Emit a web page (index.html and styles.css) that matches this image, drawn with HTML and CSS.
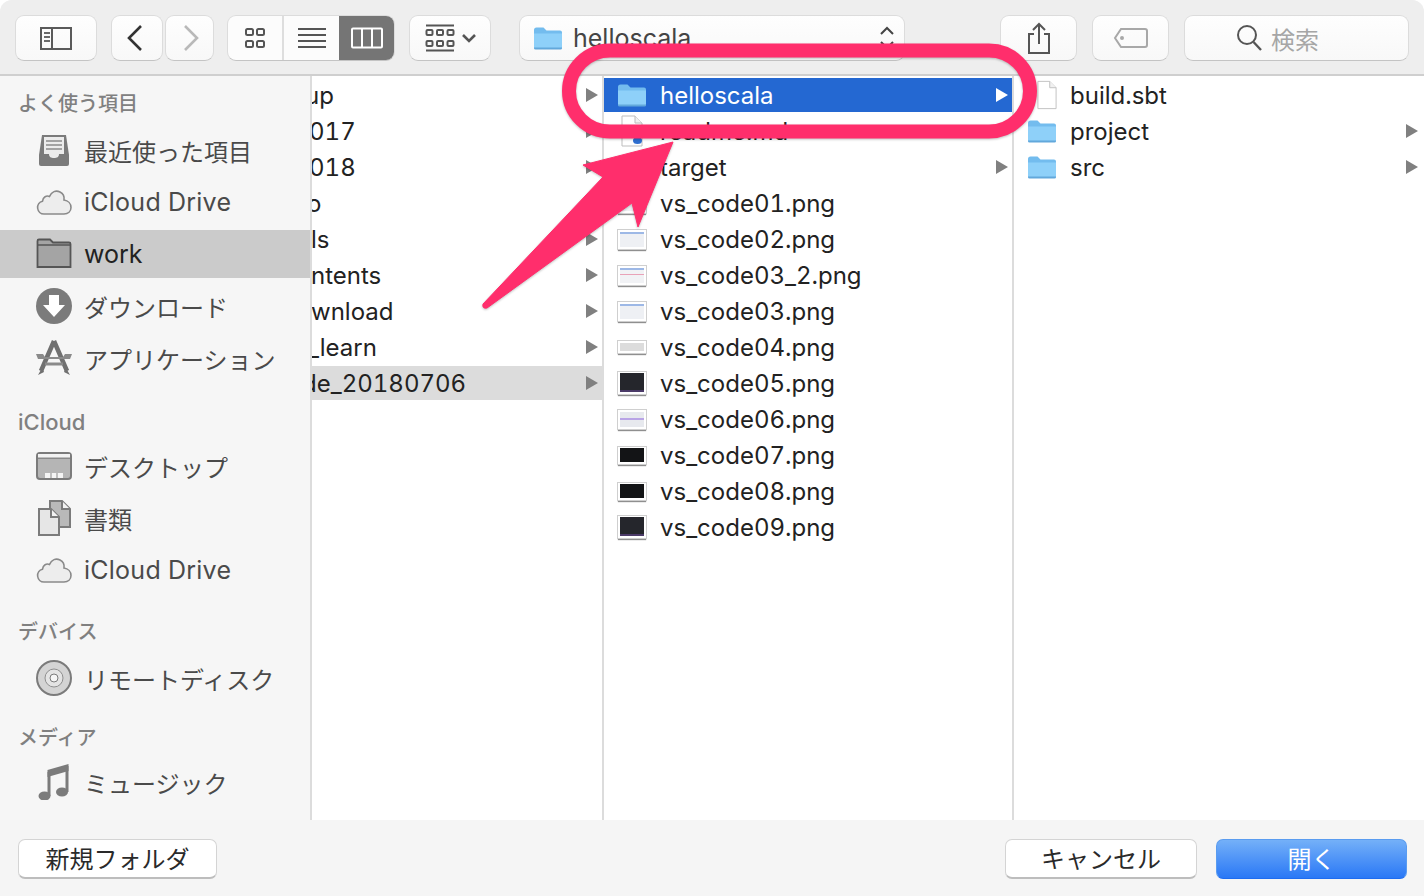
FILE: index.html
```html
<!DOCTYPE html>
<html lang="ja">
<head>
<meta charset="utf-8">
<title>helloscala</title>
<link rel="stylesheet" href="styles.css">
</head>
<body>
<svg class="defs" aria-hidden="true">
  <symbol id="folder" viewBox="0 0 30 24">
    <path d="M1 4a2.500 2.500 0 0 1 2.500-2.500h7l3 3H27a2 2 0 0 1 2 2V21a2 2 0 0 1-2 2H3a2 2 0 0 1-2-2z" fill="#73bcee"/>
    <path d="M1 7.500h28V21a2 2 0 0 1-2 2H3a2 2 0 0 1-2-2z" fill="#8ed0f9"/>
    <path d="M1 21.500h28V22a1.500 1.500 0 0 1-1.500 1.500h-25A1.500 1.500 0 0 1 1 22z" fill="#62a8db"/>
  </symbol>
  <symbol id="doc" viewBox="0 0 22 32">
    <path d="M1 1h13l7 7v23H1z" fill="#fff" stroke="#bdbdbd"/>
    <path d="M14 1v7h7" fill="#f1f1f1" stroke="#bdbdbd"/>
  </symbol>
  <symbol id="cloud" viewBox="0 0 36 36">
    <path d="M8 30a6.500 6.500 0 0 1-1.500-12.800C7 13 10.500 11 13.500 12.500 15.500 7.500 20 6 24 8c3 1.500 4.500 4.500 4 8 4 .5 7 3.500 7 7.500S32 30 28 30z" fill="#ededed" stroke="#8a8a8a" stroke-width="1.600"/>
  </symbol>
</svg>

<div class="window">
  <header class="toolbar">
    <button class="btn w-toggle" aria-label="sidebar">
      <svg width="34" height="26" viewBox="0 0 34 26"><rect x="2" y="3" width="30" height="21" fill="none" stroke="#5a5a5a" stroke-width="2"/><path d="M13 3v21" stroke="#5a5a5a" stroke-width="2"/><path d="M5 8h6M5 12h6M5 16h6" stroke="#6a6a6a" stroke-width="2"/></svg>
    </button>
    <button class="btn w-back" aria-label="back">
      <svg width="20" height="28" viewBox="0 0 20 28"><path d="M16 2 4 14l12 12" fill="none" stroke="#333" stroke-width="2.600"/></svg>
    </button>
    <button class="btn w-fwd" aria-label="forward">
      <svg width="20" height="28" viewBox="0 0 20 28"><path d="M4 2l12 12L4 26" fill="none" stroke="#b9b9b9" stroke-width="2.600"/></svg>
    </button>
    <div class="seg">
      <span class="seg-i seg-a">
        <svg width="22" height="22" viewBox="0 0 22 22" fill="none" stroke="#555" stroke-width="2"><rect x="2" y="2" width="7" height="6" rx="1.500"/><rect x="13" y="2" width="7" height="6" rx="1.500"/><rect x="2" y="14" width="7" height="6" rx="1.500"/><rect x="13" y="14" width="7" height="6" rx="1.500"/></svg>
      </span>
      <span class="seg-i seg-b">
        <svg width="30" height="22" viewBox="0 0 30 22" stroke="#555" stroke-width="2"><path d="M1 2h28M1 8h28M1 14h28M1 20h28"/></svg>
      </span>
      <span class="seg-i seg-c">
        <svg width="32" height="22" viewBox="0 0 32 22" fill="none" stroke="#fff" stroke-width="2"><rect x="1" y="1.500" width="30" height="19" rx="1"/><path d="M11 1.500v19M21 1.500v19"/></svg>
      </span>
    </div>
    <button class="btn w-arr" aria-label="arrange">
      <svg width="52" height="28" viewBox="0 0 52 28" fill="none" stroke="#555" stroke-width="2"><path d="M1 1.500h28M1 26.500h28"/><rect x="1.500" y="6" width="6" height="5" rx="1"/><rect x="12" y="6" width="6" height="5" rx="1"/><rect x="22.500" y="6" width="6" height="5" rx="1"/><rect x="1.500" y="17" width="6" height="5" rx="1"/><rect x="12" y="17" width="6" height="5" rx="1"/><rect x="22.500" y="17" width="6" height="5" rx="1"/><path d="M38 11l6 6 6-6" stroke-width="2.600"/></svg>
    </button>
    <div class="btn w-path">
      <svg class="path-ic" width="30" height="24"><use href="#folder"/></svg>
      <span class="path-t">helloscala</span>
      <svg class="updown" width="16" height="26" viewBox="0 0 16 26" fill="none" stroke="#444" stroke-width="2"><path d="M2 9l6-6 6 6M2 17l6 6 6-6"/></svg>
    </div>
    <button class="btn w-share" aria-label="share">
      <svg width="26" height="32" viewBox="0 0 26 32" fill="none" stroke="#555" stroke-width="2"><path d="M8 12H3v19h20V12h-5"/><path d="M13 22V2M7 8l6-6 6 6"/></svg>
    </button>
    <button class="btn w-tag" aria-label="tag">
      <svg width="36" height="22" viewBox="0 0 36 22" fill="none" stroke="#a8a8a8" stroke-width="2"><path d="M8 2h24a2 2 0 0 1 2 2v14a2 2 0 0 1-2 2H8l-6-9z"/><circle cx="9" cy="11" r="1"/></svg>
    </button>
    <div class="btn w-search">
      <svg width="26" height="28" viewBox="0 0 26 28" fill="none" stroke="#555" stroke-width="2"><circle cx="11" cy="11" r="9"/><path d="M17.500 18 25 26" stroke-width="2.400"/></svg>
      <span class="search-t">検索</span>
    </div>
  </header>

  <main class="body">
    <nav class="side">
      <div class="lab lab-1">よく使う項目</div>
      <div class="item">
        <svg class="ico" viewBox="0 0 36 36"><path d="M6 3h24l3 20v9a2 2 0 0 1-2 2H5a2 2 0 0 1-2-2v-9z" fill="#7b7b7b"/><path d="M8 5h20v17h-5c0 3-2 4-5 4s-5-1-5-4H8z" fill="#ececec"/><path d="M10 9h16M10 13h16M10 17h16" stroke="#8a8a8a" stroke-width="1.500"/></svg>
        <span>最近使った項目</span>
      </div>
      <div class="item">
        <svg class="ico"><use href="#cloud"/></svg>
        <span class="drive">iCloud Drive</span>
      </div>
      <div class="item item-on">
        <svg class="ico" viewBox="0 0 36 36"><path d="M1.500 5a1.500 1.500 0 0 1 1.500-1.500h11l3 3h16A1.500 1.500 0 0 1 34.500 8v23H1.500z" fill="#a4a4a4" stroke="#555" stroke-width="1.800"/><path d="M2 9h32" stroke="#555" stroke-width="1.400"/></svg>
        <span>work</span>
      </div>
      <div class="item">
        <svg class="ico" viewBox="0 0 36 36"><circle cx="18" cy="18" r="18" fill="#7b7b7b"/><path d="M13 7h10v10h6L18 29 7 17h6z" fill="#fff"/></svg>
        <span>ダウンロード</span>
      </div>
      <div class="item">
        <svg class="ico" viewBox="0 0 36 36"><path d="M18 1 5 31M18 1l13 30" stroke="#707070" stroke-width="4.500" fill="none"/><path d="M0 14h7l2 3h18l2-3h7l-2 5H2z" fill="#8a8a8a"/><path d="M9 24h18" stroke="#8a8a8a" stroke-width="3"/><path d="M6 28l-4 7 6-3zM30 28l4 7-6-3z" fill="#707070"/></svg>
        <span>アプリケーション</span>
      </div>

      <div class="lab lab-2">iCloud</div>
      <div class="item">
        <svg class="ico" viewBox="0 0 36 36"><rect x="1" y="5" width="34" height="26" rx="3" fill="#b5b5b5" stroke="#7b7b7b" stroke-width="2"/><path d="M1 10h34" stroke="#7b7b7b" stroke-width="1.500"/><path d="M2 6h32v3.500H2z" fill="#f2f2f2"/><path d="M9 25h18v5H9z" fill="#f4f4f4"/><path d="M15 25v5M21 25v5" stroke="#8a8a8a"/></svg>
        <span>デスクトップ</span>
      </div>
      <div class="item">
        <svg class="ico" viewBox="0 0 36 36"><path d="M14 1h12l8 8v18H14z" fill="#b9b9b9" stroke="#7b7b7b" stroke-width="2"/><path d="M3 9h12l8 8v18H3z" fill="#e6e6e6" stroke="#7b7b7b" stroke-width="2"/><path d="M15 9v8h8M26 1v8h8" fill="#f2f2f2" stroke="#7b7b7b" stroke-width="2"/></svg>
        <span>書類</span>
      </div>
      <div class="item">
        <svg class="ico"><use href="#cloud"/></svg>
        <span class="drive">iCloud Drive</span>
      </div>

      <div class="lab lab-3">デバイス</div>
      <div class="item">
        <svg class="ico" viewBox="0 0 36 36"><circle cx="18" cy="18" r="17" fill="#d4d4d4" stroke="#7b7b7b" stroke-width="2"/><circle cx="18" cy="18" r="9" fill="#e4e4e4" stroke="#8f8f8f"/><circle cx="18" cy="18" r="4" fill="#f6f6f6" stroke="#7b7b7b"/></svg>
        <span>リモートディスク</span>
      </div>

      <div class="lab lab-4">メディア</div>
      <div class="item">
        <svg class="ico" viewBox="0 0 36 36"><path d="M13 8v24M31 2v26" stroke="#7b7b7b" stroke-width="3"/><path d="M11.500 6 32.500 0v7L11.500 13z" fill="#7b7b7b"/><ellipse cx="8.500" cy="32" rx="6" ry="4.500" fill="#7b7b7b"/><ellipse cx="26" cy="28" rx="6" ry="4.500" fill="#7b7b7b"/></svg>
        <span>ミュージック</span>
      </div>
    </nav>

    <section class="col col-1">
      <div class="row"><span class="cut-a">up</span><i class="tri"></i></div>
      <div class="row"><span class="cut-b">017</span><i class="tri"></i></div>
      <div class="row"><span class="cut-b">018</span><i class="tri"></i></div>
      <div class="row"><span class="cut-c">o</span><i class="tri"></i></div>
      <div class="row"><span class="cut-d">ls</span><i class="tri"></i></div>
      <div class="row"><span class="cut-e">ntents</span><i class="tri"></i></div>
      <div class="row"><span class="cut-e">wnload</span><i class="tri"></i></div>
      <div class="row"><span class="cut-g">_learn</span><i class="tri"></i></div>
      <div class="row row-gray"><span class="cut-f">de_20180706</span><i class="tri"></i></div>
    </section>

    <section class="col col-2">
      <div class="row row-sel"><svg class="fic"><use href="#folder"/></svg><span>helloscala</span><i class="tri tri-w"></i></div>
      <div class="row"><span class="slot"><svg class="dic" width="24" height="32"><use href="#doc"/></svg><b class="dic-mark"></b></span><span>readme.md</span></div>
      <div class="row"><svg class="fic"><use href="#folder"/></svg><span>target</span><i class="tri"></i></div>
      <div class="row"><span class="slot"><i class="th th-lt"></i></span><span>vs_code01.png</span></div>
      <div class="row"><span class="slot"><i class="th th-lt"></i></span><span>vs_code02.png</span></div>
      <div class="row"><span class="slot"><i class="th th-pink"></i></span><span>vs_code03_2.png</span></div>
      <div class="row"><span class="slot"><i class="th th-lt"></i></span><span>vs_code03.png</span></div>
      <div class="row"><span class="slot"><i class="th th-wide"></i></span><span>vs_code04.png</span></div>
      <div class="row"><span class="slot"><i class="th th-tall"></i></span><span>vs_code05.png</span></div>
      <div class="row"><span class="slot"><i class="th th-purple"></i></span><span>vs_code06.png</span></div>
      <div class="row"><span class="slot"><i class="th th-dk"></i></span><span>vs_code07.png</span></div>
      <div class="row"><span class="slot"><i class="th th-dk"></i></span><span>vs_code08.png</span></div>
      <div class="row"><span class="slot"><i class="th th-tall"></i></span><span>vs_code09.png</span></div>
    </section>

    <section class="col col-3">
      <div class="row"><span class="slot slot-doc"><svg width="20" height="30"><use href="#doc"/></svg></span><span>build.sbt</span></div>
      <div class="row"><svg class="fic"><use href="#folder"/></svg><span>project</span><i class="tri"></i></div>
      <div class="row"><svg class="fic"><use href="#folder"/></svg><span>src</span><i class="tri"></i></div>
    </section>
  </main>

  <footer class="foot">
    <button class="fbtn f-new">新規フォルダ</button>
    <button class="fbtn f-cancel">キャンセル</button>
    <button class="fbtn f-open">開く</button>
  </footer>

  <svg class="annot" width="1424" height="896" viewBox="0 0 1424 896" aria-hidden="true">
    <rect x="569" y="50.500" width="461" height="81" rx="41" fill="none" stroke="#ff2e6c" stroke-width="14"/>
    <path d="M673 142 583 165 603 177 483 304Q482 309 487 308L632 203 638 227z" fill="#ff2e6c" stroke="#ff2e6c" stroke-linejoin="round"/>
  </svg>
</div>
</body>
</html>
```
FILE: styles.css
```css
* { box-sizing: border-box; }
html, body { margin: 0; padding: 0; height: 100%; background: #fff; overflow: hidden; }
body { font-family: Inter, "Noto Sans CJK JP", sans-serif; font-feature-settings: "tnum"; color: #222; }
.defs { display: none; }

.window {
  position: relative;
  width: 1424px;
  height: 896px;
  display: flex;
  flex-direction: column;
  border-radius: 12px 12px 0 0;
  overflow: hidden;
  background: #f5f5f5;
}

/* toolbar */
.toolbar {
  height: 76px;
  flex: none;
  display: flex;
  align-items: flex-start;
  padding: 15px 0 0 15px;
  background: #eeeeee;
  border-bottom: 2px solid #cfcfcf;
}
.btn {
  height: 46px;
  padding: 0;
  display: flex;
  align-items: center;
  justify-content: center;
  background: linear-gradient(#fefefe, #f8f8f8);
  border: 1px solid #dcdcdc;
  border-bottom-color: #c4c4c4;
  border-radius: 9px;
  flex: none;
  font: inherit;
}
.w-toggle { width: 82px; margin-right: 14px; }
.w-back { width: 52px; margin-right: 2px; padding-right: 4px; }
.w-fwd { width: 49px; margin-right: 13px; padding-left: 3px; }
.seg {
  width: 168px;
  height: 46px;
  display: flex;
  flex: none;
  margin-right: 14px;
  background: #fcfcfc;
  border: 1px solid #dcdcdc;
  border-bottom-color: #c4c4c4;
  border-radius: 9px;
  overflow: hidden;
}
.seg-i { display: flex; align-items: center; justify-content: center; }
.seg-a { width: 56px; border-right: 2px solid #dedede; }
.seg-b { width: 55px; }
.seg-c { flex: 1; background: #757575; margin: -1px -1px -1px 0; }
.w-arr { width: 82px; margin-right: 28px; padding-left: 2px; }
.w-path {
  width: 386px;
  margin-right: 95px;
  justify-content: flex-start;
  padding-left: 13px;
  position: relative;
}
.path-t { font-size: 25px; margin-left: 10px; color: #444; }
.updown { position: absolute; right: 9px; top: 9px; }
.w-share { width: 77px; margin-right: 15px; }
.w-tag { width: 77px; margin-right: 15px; }
.w-search { width: 225px; gap: 9px; padding-right: 38px; }
.search-t { font-size: 24px; color: #a6a6a6; }

/* main */
.body { height: 744px; flex: none; display: flex; background: #fff; }

.side {
  width: 312px;
  flex: none;
  background: #f6f6f6;
  border-right: 2px solid #dcdcdc;
  padding-top: 16px;
  display: flex;
  flex-direction: column;
}
.lab {
  height: 24px;
  line-height: 24px;
  padding-left: 18px;
  font-size: 20px;
  font-weight: 500;
  color: #808080;
}
.lab-1 { margin-bottom: 10px; }
.lab-2 { margin-top: 24px; margin-bottom: 8px; font-size: 22px; }
.lab-3 { margin-top: 22px; margin-bottom: 10px; }
.lab-4 { margin-top: 20px; margin-bottom: 8px; }
.item {
  height: 48px;
  flex: none;
  margin-bottom: 4px;
  display: flex;
  align-items: center;
  padding-left: 36px;
  gap: 12px;
  font-size: 24px;
  color: #4a4a4a;
}
.drive { font-size: 25px; letter-spacing: .25px; }
.item-on { background: #cbcbcb; color: #222; font-size: 25px; }
.ico { width: 36px; height: 36px; flex: none; }

/* columns */
.col { height: 100%; padding-top: 2px; flex: none; overflow: hidden; }
.col-1 { width: 292px; border-right: 2px solid #dcdcdc; }
.col-2 { width: 410px; border-right: 2px solid #dcdcdc; }
.col-3 { flex: 1; }
.row {
  height: 34px;
  margin-bottom: 2px;
  display: flex;
  align-items: center;
  padding-left: 13px;
  padding-right: 4px;
  font-size: 24px;
  color: #222;
  white-space: nowrap;
}
.col-1 .row { padding-left: 0; }
.col-3 .row { padding-right: 6px; }
.row-sel { background: #2468d2; color: #fff; }
.row-gray { background: #dcdcdc; }
.cut-a { margin-left: -7px; }
.cut-b { margin-left: -3px; }
.cut-c { margin-left: -5px; }
.cut-d { margin-left: -1px; }
.cut-e { margin-left: -1px; }
.cut-f { margin-left: -10px; }
.cut-g { margin-left: -4px; }

.fic { width: 30px; height: 24px; flex: none; margin-right: 13px; }
.slot {
  width: 30px;
  height: 34px;
  flex: none;
  margin-right: 13px;
  display: flex;
  align-items: center;
  justify-content: center;
  position: relative;
}
.slot-doc { justify-content: flex-end; }
.dic-mark {
  position: absolute;
  left: 16px;
  bottom: 4px;
  width: 9px;
  height: 7px;
  background: #2f6fd0;
  border-radius: 50%;
}
.tri {
  margin-left: auto;
  width: 0;
  height: 0;
  border-left: 12px solid #808080;
  border-top: 7px solid transparent;
  border-bottom: 7px solid transparent;
}
.tri-w { border-left-color: #fff; }

/* thumbnails */
.th {
  display: block;
  width: 28px;
  height: 19px;
  background: #f4f5f8;
  border: 2px solid #fff;
  outline: 1px solid #cfcfcf;
  box-shadow: 0 2px 1px #8f8f8f;
}
.th-lt { background: linear-gradient(#9db8e6 0 2px, #eef0f4 2px); }
.th-pink { background: linear-gradient(#9db8e6 0 2px, #f1f2f5 2px 6px, #e9a2b8 6px 7px, #f1f2f5 7px); }
.th-purple { background: linear-gradient(#e7e9ee 0 6px, #b9a4e6 6px 8px, #e7e9ee 8px); }
.th-wide { height: 12px; background: #dcdcdc; }
.th-dk { height: 17px; border-top-width: 1px; background: #131416; }
.th-tall { height: 22px; border-width: 1px 2px 2px; background: linear-gradient(#25262c 0 17px, #4b3a68 17px); }

/* footer */
.foot {
  height: 76px;
  flex: 1;
  display: flex;
  align-items: flex-start;
  padding: 19px 17px 0 18px;
  background: #f5f5f5;
}
.fbtn {
  height: 40px;
  padding: 0 0 3px;
  font: inherit;
  font-size: 24px;
  color: #2a2a2a;
  background: #fff;
  border: 1px solid #d4d4d4;
  border-bottom: 2px solid #bdbdbd;
  border-radius: 7px;
}
.f-new { width: 199px; margin-right: auto; }
.f-cancel { width: 192px; margin-right: 19px; }
.f-open {
  width: 191px;
  color: #fff;
  background: linear-gradient(#74b0f8, #2a78f6);
  border: 1px solid #5a9cf0;
  border-bottom: 1px solid #1e6cf0;
}

/* annotation lying over the window */
.annot { position: absolute; left: 0; top: 0; pointer-events: none; filter: drop-shadow(0 1px 1px rgba(0,0,0,.25)); }
```
